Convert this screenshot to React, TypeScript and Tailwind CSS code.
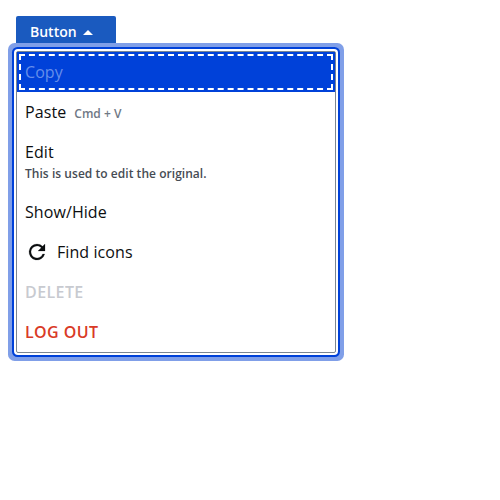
const item = "flex h-10 items-center px-2";

export default function App() {
  return (
    <div className="h-[500px] w-[500px] bg-white p-4 font-['Open_Sans','Noto_Sans',sans-serif] text-base leading-6 tracking-[0.08px] text-[#0c0e10]">
      <button className="flex h-8 w-[100px] items-center rounded-[2px] bg-[#1a5abf] pl-[14px] text-[14px] leading-5 font-semibold tracking-normal text-white">
        Button
        <svg className="ml-1.5" width="10" height="5" viewBox="0 0 10 5" fill="currentColor">
          <path d="M0 5 5 0l5 5z" />
        </svg>
      </button>
      <ul
        role="menu"
        className="relative mt-[3px] w-[320px] rounded-[2px] border border-[#7c8691] bg-white shadow-[0_0_0_2px_#fff,0_0_0_4px_#0041d9,0_0_0_8px_#809fe8]"
      >
        <li className={`${item} bg-[#0041d9] text-[#668eea] outline-2 -outline-offset-4 outline-dashed outline-white`}>Copy</li>
        <li className={item}>
          Paste
          <span className="ml-2 pt-[3px] text-xs font-semibold tracking-[0.04px] text-[#6f7885]">Cmd + V</span>
        </li>
        <li className="h-[60px] px-2 pt-2">
          <div>Edit</div>
          <div className="text-xs leading-5 font-semibold tracking-[0.04px] text-[#464c54]">This is used to edit the original.</div>
        </li>
        <li className={item}>Show/Hide</li>
        <li className={item}>
          <svg className="mr-2" width="24" height="24" viewBox="0 0 24 24" fill="currentColor">
            <path stroke="currentColor" strokeWidth=".2" d="M17.65 6.35A7.96 7.96 0 0 0 12 4a8 8 0 1 0 7.73 10h-2.08A6 6 0 1 1 12 6c1.66 0 3.14.69 4.22 1.78L13 11h7V4z" />
          </svg>
          Find icons
        </li>
        <li className={`${item} font-semibold tracking-[0.4px] text-[#c8cad0]`}>DELETE</li>
        <li className={`${item} font-semibold tracking-[0.4px] text-[#d93a26]`}>LOG OUT</li>
      </ul>
    </div>
  );
}
